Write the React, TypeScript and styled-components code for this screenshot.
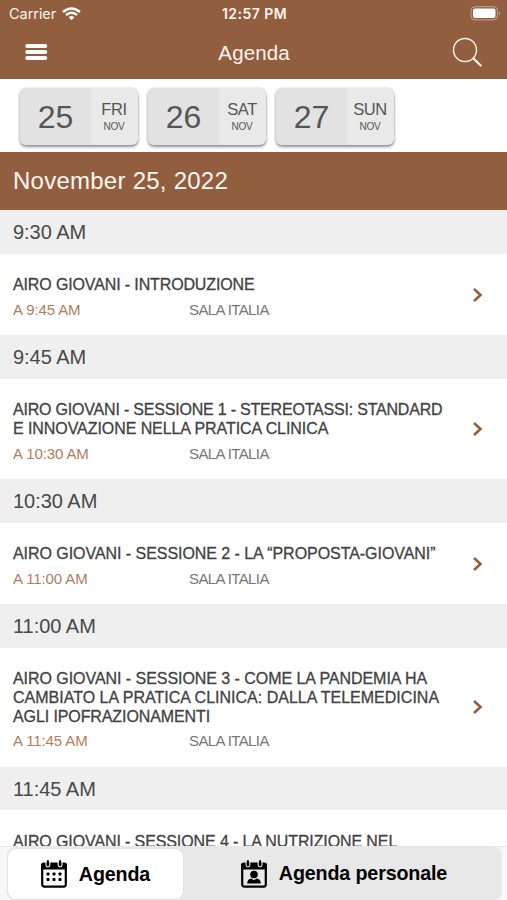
import React from "react";
import styled, { createGlobalStyle } from "styled-components";

const brown = "#915f40";

const GlobalStyle = createGlobalStyle`
  * { box-sizing: border-box; }
  body { margin: 0; background: #fff; font-family: "Liberation Sans", Arial, sans-serif; overflow: hidden; }
`;

const Screen = styled.main`
  width: 507px;
  height: 900px;
  display: flex;
  flex-direction: column;
  overflow: hidden;
  background: #fff;
`;

const Header = styled.header`
  flex: none;
  height: 79px;
  background: ${brown};
  color: #fff4ec;
`;

const StatusBar = styled.div`
  height: 27px;
  display: grid;
  grid-template-columns: 1fr auto 1fr;
  align-items: center;
  padding: 0 6px 0 9px;
  font: 14.5px/27px Inter, sans-serif;
`;

const Carrier = styled.div`
  display: flex;
  align-items: center;
  gap: 6px;
  letter-spacing: -0.05px;
`;

const Clock = styled.div`
  font-size: 14px;
  font-weight: 600;
  letter-spacing: 0.45px;
  margin-right: 1px;
`;

const Battery = styled.svg`
  justify-self: end;
  display: block;
`;

const NavBar = styled.div`
  height: 52px;
  display: grid;
  grid-template-columns: 1fr auto 1fr;
  align-items: center;
  padding: 0 24px 2px 25px;
`;

const IconButton = styled.button<{ $end?: boolean }>`
  display: flex;
  padding: 0;
  border: 0;
  background: none;
  color: #fff;
  justify-self: ${(p) => (p.$end ? "end" : "start")};
`;

const Title = styled.h1`
  margin: 2px 0 0;
  font-size: 20.5px;
  font-weight: 400;
  letter-spacing: 0.1px;
`;

const Days = styled.nav`
  flex: none;
  height: 73.3px;
  display: flex;
  gap: 10px;
  padding: 8.5px 20px 0;
`;

const DayCard = styled.button`
  width: 118px;
  height: 57px;
  display: flex;
  padding: 0;
  border: 0;
  border-radius: 6px;
  overflow: hidden;
  color: #555;
  background: #e9e9e9;
  font-family: inherit;
  box-shadow: 0 2px 3px rgba(0, 0, 0, 0.42), 0 0 2px rgba(0, 0, 0, 0.18);
`;

const DayNumber = styled.span`
  width: 71px;
  height: 100%;
  background: #e2e2e2;
  font-size: 32px;
  line-height: 58px;
  text-align: center;
`;

const DayLabel = styled.span`
  flex: 1;
  display: flex;
  flex-direction: column;
  align-items: center;
  padding: 12.5px 1px 0 0;
  font-size: 16.5px;
  line-height: 18px;
  letter-spacing: -0.4px;
`;

const Month = styled.small`
  font-size: 10px;
  line-height: 18.5px;
  letter-spacing: -0.3px;
`;

const DateBar = styled.h2`
  flex: none;
  margin: 0;
  height: 57.5px;
  padding-left: 13px;
  background: ${brown};
  color: #fff7f0;
  font-size: 24px;
  font-weight: 400;
  line-height: 57.5px;
  letter-spacing: 0.25px;
`;

const TimeBar = styled.h3`
  margin: 0;
  height: 43.8px;
  padding-left: 13px;
  background: #efefef;
  color: #484848;
  font-size: 20px;
  font-weight: 400;
  line-height: 45px;
  letter-spacing: -0.03px;
`;

const Sessions = styled.section`
  flex: 1;
  min-height: 0;
  overflow: hidden;
`;

const SessionRow = styled.article`
  display: flex;
  align-items: center;
  justify-content: space-between;
  padding: 22.4px 23px 13.7px 13px;
`;

const SessionTitle = styled.div`
  color: #424242;
  font-size: 16px;
  line-height: 18.75px;
  white-space: nowrap;
  -webkit-text-stroke: 0.3px #424242;
`;

const TitleLine = styled.div<{ $spacing: number }>`
  letter-spacing: ${(p) => p.$spacing}px;
`;

const Details = styled.div`
  display: grid;
  grid-template-columns: 176px auto;
  height: 26.5px;
  color: #777;
  font-size: 15px;
  line-height: 29.6px;
`;

const EndTime = styled.span`
  color: #b27c5d;
  letter-spacing: -0.1px;
`;

const Room = styled.span`
  letter-spacing: -0.6px;
`;

const Chevron = styled.svg`
  flex: none;
  margin-bottom: 8px;
`;

const Footer = styled.footer`
  flex: none;
  height: 54px;
  padding: 0 5px 0 7px;
  border-top: 1px solid #e8e8e8;
  background: #f8f8f8;
`;

const Tabs = styled.div`
  display: flex;
  height: 53px;
  border-radius: 8px;
  background: #e8e8e8;
`;

const Tab = styled.button<{ $active?: boolean }>`
  width: ${(p) => (p.$active ? "177px" : "318px")};
  height: ${(p) => (p.$active ? "52px" : "53px")};
  margin-top: ${(p) => (p.$active ? "1px" : "0")};
  display: flex;
  align-items: center;
  justify-content: center;
  gap: 11px;
  padding: ${(p) => (p.$active ? "0 1px 0 0" : "0 0 0 1px")};
  border: ${(p) => (p.$active ? "1px solid #e2e2e2" : "0")};
  border-radius: 9px;
  background: ${(p) => (p.$active ? "#fff" : "transparent")};
  color: #000;
  font-family: inherit;
  font-size: 19.7px;
  font-weight: 700;
  letter-spacing: -0.15px;
`;

function CalendarIcon({ person = false }: { person?: boolean }) {
  const gap = person ? "#e8e8e8" : "#fff";
  return (
    <svg width="28" height="28" viewBox="0 0 28 28">
      <rect x="2.2" y="4" width="23.6" height="22.6" rx="2" fill="none" stroke="#000" strokeWidth="2.2" />
      <path d="M1 9.5V5q0-2.5 2.5-2.5h21Q27 2.5 27 5v4.5z" />
      <path d="M6 2v3q0 1.9 1.9 1.9T9.8 5V2M18.2 2v3q0 1.9 1.9 1.9T22 5V2" fill="none" stroke={gap} strokeWidth="1.1" />
      <path d="M7.9 1v4.2M20.1 1v4.2" stroke="#000" strokeWidth="2" strokeLinecap="round" />
      {person ? (
        <>
          <circle cx="14" cy="14.5" r="3.8" />
          <path d="M7.2 23.5q0-4.3 4.2-5l2.6 1.7 2.6-1.7q4.2.7 4.2 5z" />
        </>
      ) : (
        [14, 19.5].flatMap((y) =>
          [8, 14, 20].map((x) => (
            <rect key={`${x}-${y}`} x={x - 1.5} y={y - 1.5} width="3" height="3" rx="0.7" />
          ))
        )
      )}
    </svg>
  );
}

type Line = [text: string, spacing: number];
const sessions: { start: string; end?: string; lines: Line[] }[] = [
  { start: "9:30 AM", end: "9:45 AM", lines: [["AIRO GIOVANI - INTRODUZIONE", -0.13]] },
  {
    start: "9:45 AM",
    end: "10:30 AM",
    lines: [["AIRO GIOVANI - SESSIONE 1 - STEREOTASSI: STANDARD", -0.2], ["E INNOVAZIONE NELLA PRATICA CLINICA", -0.07]],
  },
  { start: "10:30 AM", end: "11:00 AM", lines: [["AIRO GIOVANI - SESSIONE 2 - LA “PROPOSTA-GIOVANI”", -0.05]] },
  {
    start: "11:00 AM",
    end: "11:45 AM",
    lines: [
      ["AIRO GIOVANI - SESSIONE 3 - COME LA PANDEMIA HA", -0.05],
      ["CAMBIATO LA PRATICA CLINICA: DALLA TELEMEDICINA", 0.01],
      ["AGLI IPOFRAZIONAMENTI", -0.1],
    ],
  },
  { start: "11:45 AM", lines: [["AIRO GIOVANI - SESSIONE 4 - LA NUTRIZIONE NEL", -0.11]] },
];

export default function App() {
  return (
    <Screen>
      <GlobalStyle />
      <Header>
        <StatusBar>
          <Carrier>
            Carrier
            <svg width="19" height="14" viewBox="0 0 19 14" fill="none" stroke="#fff" strokeWidth="2.5">
              <path d="M1 5q8.5-7 17 0" />
              <path d="M4 8q5.5-4.4 11 0" />
              <path d="M6.7 10.2q2.8-2.2 5.6 0L9.5 13.2z" fill="#fff" stroke="none" />
            </svg>
          </Carrier>
          <Clock>12:57 PM</Clock>
          <Battery width="31" height="15" viewBox="0 0 31 15">
            <rect x="1" y="0.7" width="26.5" height="13.2" rx="4" fill="none" stroke="#c4a693" />
            <rect x="3" y="2.6" width="22.5" height="9.4" rx="2" fill="#fff" />
            <path d="M29 5q2 2.2 0 4.4z" fill="#c4a693" />
          </Battery>
        </StatusBar>
        <NavBar>
          <IconButton aria-label="Menu">
            <svg width="23" height="18" viewBox="0 0 23 18" stroke="#fff" strokeWidth="4" strokeLinecap="round">
              <path d="M2.3 3h18M2.3 9h18M2.3 15h18" />
            </svg>
          </IconButton>
          <Title>Agenda</Title>
          <IconButton $end aria-label="Search">
            <svg width="31" height="31" viewBox="0 0 31 31" fill="none" stroke="#fff4ec" strokeLinecap="round">
              <circle cx="13" cy="13" r="11.5" strokeWidth="1.4" />
              <path d="M21.5 21.5L28.7 28.5" strokeWidth="2.2" />
            </svg>
          </IconButton>
        </NavBar>
      </Header>
      <Days>
        {[["25", "FRI"], ["26", "SAT"], ["27", "SUN"]].map(([number, name]) => (
          <DayCard key={number}>
            <DayNumber>{number}</DayNumber>
            <DayLabel>
              {name}
              <Month>NOV</Month>
            </DayLabel>
          </DayCard>
        ))}
      </Days>
      <DateBar>November 25, 2022</DateBar>
      <Sessions>
        {sessions.map((session) => (
          <React.Fragment key={session.start}>
            <TimeBar>{session.start}</TimeBar>
            <SessionRow>
              <div>
                <SessionTitle>
                  {session.lines.map(([text, spacing]) => (
                    <TitleLine key={text} $spacing={spacing}>{text}</TitleLine>
                  ))}
                </SessionTitle>
                {session.end && (
                  <Details>
                    <EndTime>A {session.end}</EndTime>
                    <Room>SALA ITALIA</Room>
                  </Details>
                )}
              </div>
              {session.end && (
                <Chevron width="13" height="16" viewBox="0 0 13 16" fill="none" stroke={brown} strokeWidth="2.6">
                  <path d="M3 2L9.5 8 3 14" />
                </Chevron>
              )}
            </SessionRow>
          </React.Fragment>
        ))}
      </Sessions>
      <Footer>
        <Tabs>
          <Tab $active><CalendarIcon />Agenda</Tab>
          <Tab><CalendarIcon person />Agenda personale</Tab>
        </Tabs>
      </Footer>
    </Screen>
  );
}
